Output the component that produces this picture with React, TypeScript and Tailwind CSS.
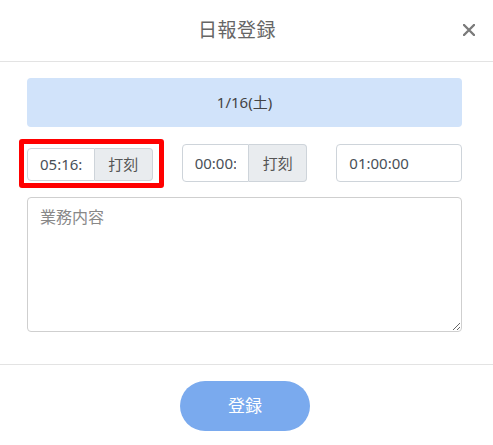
import React from 'react';

const font = { fontFamily: '"Noto Sans", "Noto Sans CJK JP", sans-serif' };

const StampGroup = ({ value, className = '' }: { value: string; className?: string }) => (
  <div className={`flex ${className}`}>
    <input
      readOnly
      value={value}
      className="flex-1 min-w-0 w-full px-[12px] border border-[#ced4da] rounded-l-[4px] bg-white text-[15px] text-[#495057] outline-none"
      style={font}
    />
    <button className="w-[58px] shrink-0 border border-l-0 border-[#ced4da] rounded-r-[4px] bg-[#e9ecef] text-[15px] text-[#555]">
      打刻
    </button>
  </div>
);

export default function App() {
  return (
    <div className="w-[493px] h-[445px] bg-white flex flex-col" style={font}>
      <div className="relative h-[62px] shrink-0 flex items-center justify-center pr-[19px] border-b border-[#e3e3e3]">
        <h1 className="text-[19px] text-[#666] tracking-wide">日報登録</h1>
        <button className="absolute right-[18px] top-[24px] w-[12px] h-[12px]" title="閉じる">
          <svg viewBox="0 0 12 12" className="w-[12px] h-[12px]">
            <path d="M1 1L11 11M11 1L1 11" stroke="#7b7b7b" strokeWidth="2.4" strokeLinecap="round" />
          </svg>
        </button>
      </div>

      <div className="pl-[27px] pr-[31px] pt-[16px] pb-[32px] border-b border-[#e3e3e3]">
        <div className="h-[49px] rounded-[4px] bg-[#d1e3fa] flex items-center justify-center text-[15px] text-[#444]">
          1/16(土)
        </div>

        <div className="mt-[17px] grid grid-cols-3 gap-[29px] h-[38px]">
          <div className="relative">
            <div className="absolute left-[-8px] top-[-5px] w-[145px] h-[49px] border-[5px] border-[#ff0000] rounded-[3px]" />
            <StampGroup value="05:16:00" className="h-[33px] mt-[4px]" />
          </div>
          <StampGroup value="00:00:00" className="h-[38px]" />
          <input
            readOnly
            value="01:00:00"
            className="h-[38px] w-full px-[12px] border border-[#ced4da] rounded-[4px] text-[15px] text-[#495057] outline-none"
            style={font}
          />
        </div>

        <textarea
          placeholder="業務内容"
          className="mt-[15px] block w-full h-[135px] border border-[#cfcfcf] rounded-[4px] px-[12px] py-[7px] text-[16px] text-[#495057] placeholder:text-[#888] outline-none"
          style={font}
        />
      </div>

      <div className="pt-[16px] pr-[3px] flex justify-center">
        <button className="w-[130px] h-[50px] rounded-full bg-[#7aaaee] text-white text-[17px]">登録</button>
      </div>
    </div>
  );
}
